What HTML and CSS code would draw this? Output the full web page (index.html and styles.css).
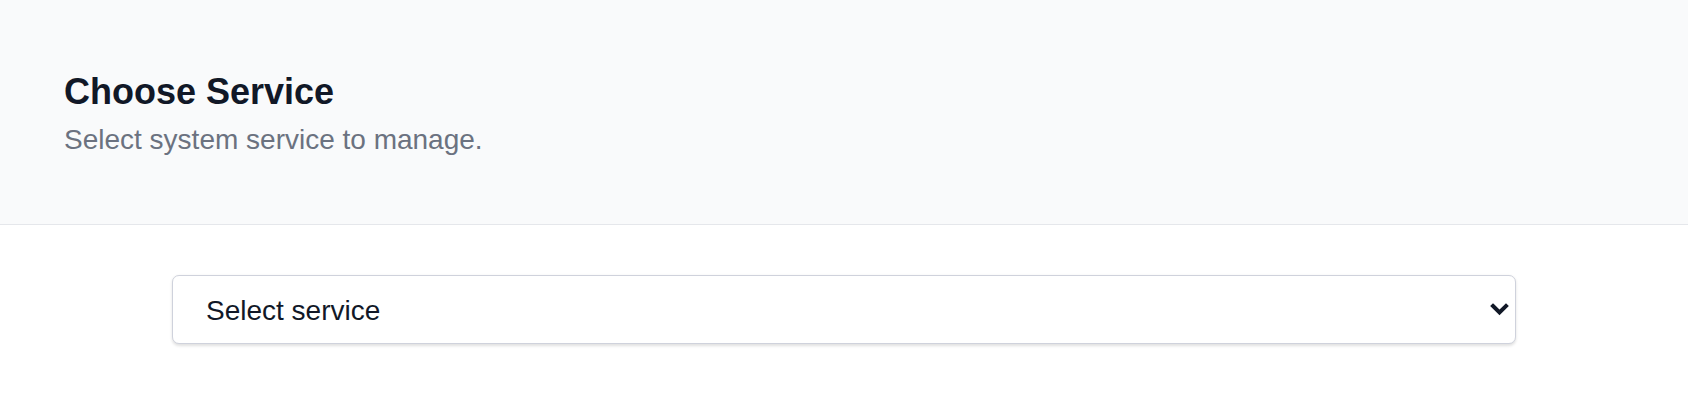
FILE: index.html
```html
<!DOCTYPE html>
<html lang="en">
<head>
    <meta charset="UTF-8">
    <meta name="viewport" content="width=device-width, initial-scale=1.0">
    <title>Choose Service</title>
    <link rel="stylesheet" href="styles.css">
</head>

<body>
    <div class="header">
        <h1 class="title">Choose Service</h1>
        <p class="subtitle">Select system service to manage.</p>
    </div>

    <div class="content">
        <div class="select-wrap">
            <select class="service-select">
                <option>Select service</option>
                <option>nginx</option>
                <option>sshd</option>
                <option>docker</option>
            </select>
            <svg class="chevron" width="19" height="13" viewBox="0 0 19 13">
                <path d="M3 3 L9.5 9.5 L16 3" fill="none" stroke="#111827" stroke-width="4" stroke-linecap="square"/>
            </svg>
        </div>
    </div>
</body>
</html>
```

FILE: styles.css
```css
html, body {
    margin: 0;
    padding: 0;
}

body {
    background-color: #fff;
    font-family: "Liberation Sans", Arial, sans-serif;
    color: #111827;
}

.header {
    background-color: #f9fafb;
    border-bottom: 1px solid #e5e7eb;
    padding: 68px 64px 63px;
}

.title {
    margin: 0;
    font-size: 36px;
    line-height: 48px;
    font-weight: bold;
    color: #111827;
}

.subtitle {
    margin: 3px 0 0;
    font-size: 28px;
    line-height: 42px;
    color: #6b7280;
}

.content {
    padding: 50px 172px;
}

.select-wrap {
    position: relative;
}

.service-select {
    display: block;
    width: 100%;
    height: 69px;
    padding: 1px 60px 0 33px;
    appearance: none;
    -webkit-appearance: none;
    background-color: #fff;
    border: 1.5px solid #cfd2dc;
    border-radius: 7px;
    box-shadow: 0 1.5px 3px rgba(0, 0, 0, 0.12);
    font-family: "Liberation Sans", Arial, sans-serif;
    font-size: 28px;
    color: #111827;
    outline: none;
}

.chevron {
    position: absolute;
    right: 7px;
    top: 28px;
    pointer-events: none;
}
```
